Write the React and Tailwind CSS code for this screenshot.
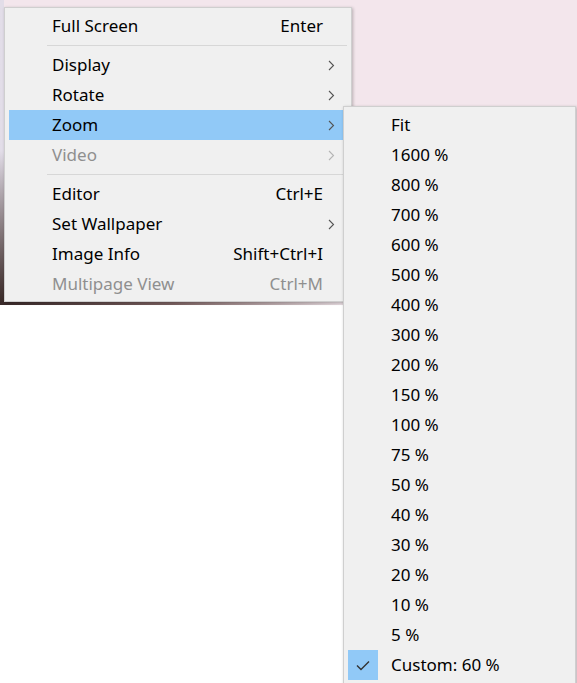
import React from "react";

const font = { fontFamily: '"Noto Sans", "Open Sans", sans-serif' };

const mainItems = [
  { label: "Full Screen", shortcut: "Enter" },
  { sep: true },
  { label: "Display", sub: true },
  { label: "Rotate", sub: true },
  { label: "Zoom", sub: true, active: true },
  { label: "Video", sub: true, disabled: true },
  { sep: true },
  { label: "Editor", shortcut: "Ctrl+E" },
  { label: "Set Wallpaper", sub: true },
  { label: "Image Info", shortcut: "Shift+Ctrl+I" },
  { label: "Multipage View", shortcut: "Ctrl+M", disabled: true },
];

const zoomItems = [
  "Fit", "1600 %", "800 %", "700 %", "600 %", "500 %", "400 %", "300 %",
  "200 %", "150 %", "100 %", "75 %", "50 %", "40 %", "30 %", "20 %",
  "10 %", "5 %",
];

function Chevron({ light }) {
  return (
    <svg width="7" height="11" viewBox="0 0 7 11" className={light ? "text-[#b5b5b5]" : "text-[#555]"}>
      <polyline points="1,1 5.5,5.5 1,10" fill="none" stroke="currentColor" strokeWidth="1.1" />
    </svg>
  );
}

function MainMenu() {
  return (
    <div
      className="absolute left-[4px] top-[7px] w-[348px] bg-[#f0f0f0] border border-[#cfcfcf] shadow-[1px_1px_3px_rgba(0,0,0,0.25)] pt-[3px] pb-[2px] px-[4px]"
      style={font}
    >
      {mainItems.map((it, i) =>
        it.sep ? (
          <div key={i} className="ml-[38px] h-[9px] flex items-center">
            <div className="h-px w-full bg-[#d7d7d7]" />
          </div>
        ) : (
          <div
            key={i}
            className={`h-[30px] flex items-center text-[17px] ${
              it.active ? "bg-[#91c9f7] -mr-[4px]" : ""
            } ${it.disabled ? "text-[#8f8f8f]" : "text-black"}`}
          >
            <span className="pl-[43px] flex-1">{it.label}</span>
            {it.shortcut && <span className="pr-[24px]">{it.shortcut}</span>}
            {it.sub && (
              <span className={`flex items-center ${it.active ? "pr-[16px]" : "pr-[12px]"}`}>
                <Chevron light={it.disabled} />
              </span>
            )}
          </div>
        )
      )}
    </div>
  );
}

function ZoomMenu() {
  return (
    <div
      className="absolute left-[343px] top-[106px] w-[233px] h-[590px] bg-[#f0f0f0] border border-[#cfcfcf] shadow-[1px_1px_3px_rgba(0,0,0,0.25)] pt-[3px] px-[4px]"
      style={font}
    >
      {zoomItems.map((z) => (
        <div key={z} className="h-[30px] flex items-center text-[17px] text-black">
          <span className="w-[30px]" />
          <span className="pl-[13px]">{z}</span>
        </div>
      ))}
      <div className="h-[30px] flex items-center text-[17px] text-black">
        <span className="w-[30px] h-[30px] bg-[#91c9f7] flex items-center justify-center">
          <svg width="14" height="11" viewBox="0 0 14 11">
            <polyline points="1,5.5 5,9.5 13,1.5" fill="none" stroke="#333" strokeWidth="1.4" />
          </svg>
        </span>
        <span className="pl-[13px]">Custom: 60 %</span>
      </div>
    </div>
  );
}

export default function App() {
  return (
    <div className="relative w-[577px] h-[683px] overflow-hidden bg-[#f3e6ec]">
      <div className="h-[302px] flex">
        <div className="w-[4px] h-full bg-gradient-to-b from-[#e2dde8] via-[#e2dde8] to-[#3a2a28]" />
      </div>
      <div className="h-[3px] w-[343px] bg-gradient-to-r from-[#3a2a2a] via-[#7a6060] to-[#e8dde2]" />
      <div className="w-[343px] h-[378px] bg-white" />
      <MainMenu />
      <ZoomMenu />
    </div>
  );
}
